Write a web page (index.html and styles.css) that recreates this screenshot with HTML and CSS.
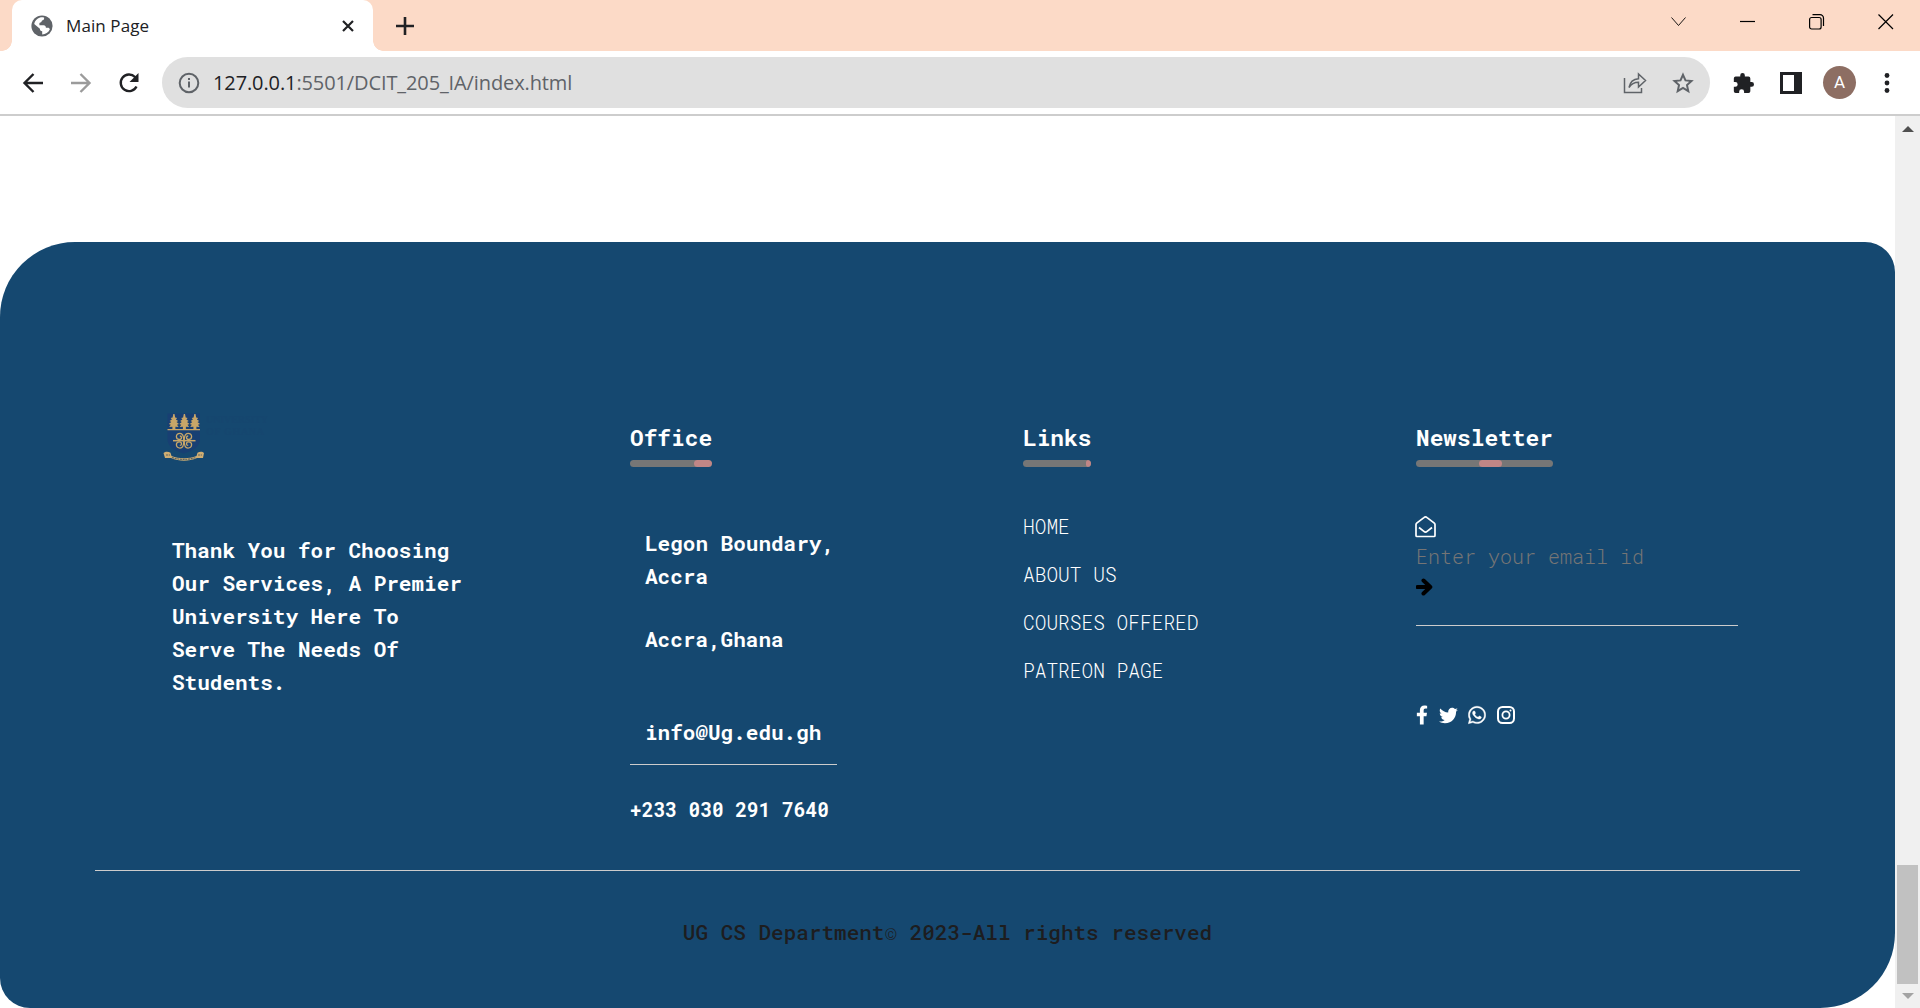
FILE: index.html
```html
<!DOCTYPE html>
<html lang="en">
<head>
<meta charset="utf-8">
<title>Main Page</title>
<link rel="stylesheet" href="styles.css">
</head>
<body>
<header class="tabstrip">
  <div class="tab">
    <svg class="globe" width="22" height="22" viewBox="0 0 22 22"><circle cx="11" cy="11" r="10.6" fill="#5f6368"/><path d="M9 2.6c1.600-.4 3-.3 4.200.1-.1 1.700-.7 2.600-2.200 2.900-.4 1.800-1.300 2-2.600 2.300v2.300h4.200c1.600 0 2.300 1 2.300 2.600h2c1 0 1.700.7 2 1.500-1.400 3.200-4.400 5.100-7.700 5.200v-3.200c-1.700-.1-2.300-.8-2.300-2.500L3.200 9.100C3.700 6 6 3.500 9 2.600z" fill="#fff"/></svg>
    <span class="tab-title">Main Page</span>
    <svg width="14" height="14" viewBox="0 0 14 14"><path d="M2 2l10 10M12 2L2 12" stroke="#202124" stroke-width="2.200"/></svg>
  </div>
  <svg class="new-tab" width="18" height="18" viewBox="0 0 18 18"><path d="M9 0v18M0 9h18" stroke="#202124" stroke-width="2.600"/></svg>
  <div class="window-buttons">
    <svg width="16" height="16" viewBox="0 0 16 16"><path d="M.5 3.500L7.500 11.500 14.500 3.500" stroke-width=".9"/></svg>
    <svg width="16" height="16" viewBox="0 0 16 16"><path d="M0 7.500h15"/></svg>
    <svg width="16" height="16" viewBox="0 0 16 16"><rect x=".6" y="3.500" width="11.500" height="11.500" rx="2"/><path d="M3.500.6H11a3.500 3.500 0 0 1 3.500 3.500v7.900"/></svg>
    <svg width="16" height="16" viewBox="0 0 16 16"><path d="M.5.5l14.500 14.500M15 .5L.5 15"/></svg>
  </div>
</header>
<nav class="toolbar">
  <svg width="22" height="22" viewBox="0 0 22 22" class="dark"><path d="M21 11H3M11.500 2L2.500 11l9 9"/></svg>
  <svg width="22" height="22" viewBox="0 0 22 22" class="dim"><path d="M1 11h18M10.500 2l9 9-9 9"/></svg>
  <svg width="22" height="22" viewBox="0 0 22 22" class="dark"><path d="M18.500 14.500A8.300 8.300 0 1 1 17 5l1.500 2"/><path d="M20.500 1v9h-9z" fill="#202124" stroke="none"/></svg>
  <div class="omnibox">
    <svg width="22" height="22" viewBox="0 0 22 22" class="grey"><circle cx="11" cy="11" r="9.300"/><path d="M11 9.500v6M11 6v2"/></svg>
    <span class="url"><b>127.0.0.1</b>:5501/DCIT_205_IA/index.html</span>
    <svg width="24" height="22" viewBox="0 0 24 22" class="grey thin"><path d="M1.500 6v14.500h17V16M6 15.500C7 10 10 7 15.500 6.700V2l7 6.500-7 6.500v-4.700C11.500 10.300 8.500 11.500 6 15.500z"/></svg>
    <svg width="22" height="22" viewBox="0 0 22 22" class="grey"><path d="M11 2.800l2.500 5.600 6 .6-4.500 4.100 1.300 6L11 15.900l-5.300 3.200 1.300-6L2.500 9l6-.6z"/></svg>
  </div>
  <svg width="22" height="22" viewBox="0 0 24 24"><path fill="#202124" d="M21.500 11H20V7a2 2 0 0 0-2-2h-4V3.500a2.500 2.500 0 0 0-5 0V5H4a2 2 0 0 0-2 2v3.800h1.500a2.700 2.700 0 0 1 0 5.400H2V21a2 2 0 0 0 2 2h3.800v-1.500a2.700 2.700 0 0 1 5.400 0V23H18a2 2 0 0 0 2-2v-5h1.500a2.500 2.500 0 0 0 0-5z"/></svg>
  <svg width="22" height="22" viewBox="0 0 22 22"><path fill="#202124" fill-rule="evenodd" d="M0 0h22v22H0zM3 3v16h11V3z"/></svg>
  <span class="avatar">A</span>
  <svg width="6" height="22" viewBox="0 0 6 22"><g fill="#202124"><circle cx="3" cy="3.500" r="2.400"/><circle cx="3" cy="11" r="2.400"/><circle cx="3" cy="18.500" r="2.400"/></g></svg>
</nav>
<div class="viewport">
  <main class="page">
    <footer class="site-footer">
      <div class="columns">
        <section class="about">
          <svg class="crest" width="112" height="50" viewBox="0 -1.500 112 50">
            <path d="M4.500 0H37v25c0 8-6 12-16.200 15C10.500 37 4.500 33 4.500 25z" fill="#183f73"/>
            <g fill="#c8a668"><path id="tree" d="M10.300.5h1.200l.7 3.500 1.900.4-1.200 1.700 2.300 1.400-1.700 1 2.500 2-2 .7 1.600 2.400-3.200-.3v2.700H9.400v-2.700l-3.200.3 1.600-2.400-2-.7 2.500-2-1.700-1 2.300-1.400-1.200-1.700 1.900-.4z"/><use href="#tree" x="10.500"/><use href="#tree" x="21"/><path d="M4.500 15.400H37v1.300H4.500z"/></g>
            <g fill="none" stroke="#c8a668" stroke-width="1.300"><path d="M10 27.200h22.500" stroke-width="1.500"/><path id="curl" d="M20.800 27.200c0-3.200-.2-7.400-3.800-7.400-2.200 0-3.600 1.500-3.600 3.300s1.400 2.900 2.900 2.900 2.200-1 2.200-2-.8-1.500-1.700-1.500"/><use href="#curl" transform="matrix(-1 0 0 1 42 0)"/><use href="#curl" transform="matrix(1 0 0 -1 0 54.400)"/><use href="#curl" transform="matrix(-1 0 0 -1 42 54.400)"/></g>
            <path d="M.5 39.500c2-1.800 5-1.500 7-.2l1 3.200c8 3 17 3 25 0l1-3.200c2-1.300 5-1.600 6.500.2l-1 5h-6c-8 3.500-18 3.500-26 0H2z" fill="#cfae72"/>
            <path d="M9 44c8 2.500 16 2.500 24 0M3 41.500h4M35 41.500h4" fill="none" stroke="#5c6464" stroke-width="1.200" stroke-dasharray="2 .7"/>
            <g class="wordmark"><text x="43" y="9.500" textLength="62">UNIVERSITY</text><text x="43" y="21.500" textLength="58">OF GHANA</text></g>
          </svg>
          <p>Thank You for Choosing Our Services, A Premier University Here To Serve The Needs Of Students.</p>
        </section>
        <section class="office">
          <h3>Office<span class="bar"><i></i></span></h3>
          <p>Legon Boundary, Accra</p>
          <p class="city">Accra,Ghana</p>
          <p class="email">info@Ug.edu.gh</p>
          <h4>+233 030 291 7640</h4>
        </section>
        <section class="links">
          <h3>Links<span class="bar"><i></i></span></h3>
          <ul><li>HOME</li><li>ABOUT US</li><li>COURSES OFFERED</li><li>PATREON PAGE</li></ul>
        </section>
        <section class="newsletter">
          <h3>Newsletter<span class="bar"><i></i></span></h3>
          <div class="form">
            <svg width="21" height="22" viewBox="0 0 21 22"><path d="M1 8.500c0-.6.300-1 .7-1.400L8.900 1.600c1-.8 2.200-.8 3.200 0l7.200 5.500c.4.400.7.800.7 1.400v11c0 .6-.4 1-1 1H2c-.6 0-1-.4-1-1zM4 11.500l4.900 3.900c1 .9 2.200.9 3.200 0L17 11.500" fill="none" stroke="#fff" stroke-width="1.700"/></svg>
            <span class="placeholder">Enter your email id</span>
            <svg width="17" height="18" viewBox="0 0 17 18"><path d="M1.500 9h12.500M7.500 2.500l6.800 6.500-6.800 6.500" fill="none" stroke="#000" stroke-width="4" stroke-linecap="round" stroke-linejoin="round"/></svg>
          </div>
          <div class="social">
            <svg width="12" height="20" viewBox="0 0 320 512"><path d="M279 288l14-93h-89v-60c0-25 12-50 52-50h41V7s-37-7-72-7c-73 0-121 44-121 125v70H23v93h81v224h100V288z"/></svg>
            <svg width="19" height="19" viewBox="0 0 512 512"><path d="M459 152c.3 4.500.3 9 .3 14 0 139-106 299-299 299-59 0-115-17-161-47 8 1 16 1.300 25 1.300 49 0 94-17 130-45-46-1-85-31-98-73 7 1 13 2 20 2 9 0 19-1 28-4-48-10-84-52-84-103v-1c14 8 30 13 47 13-28-19-47-51-47-87 0-19 5-37 14-53 52 64 129 105 216 110-2-8-3-16-3-24 0-58 47-105 105-105 30 0 58 13 77 33 24-5 46-13 67-25-8 25-24 45-46 58 21-2 42-8 60-16-14 21-32 39-52 54z"/></svg>
            <svg width="18" height="20" viewBox="0 0 448 512"><path stroke="#fff" stroke-width="10" d="M381 97C339 55 283 32 224 32 102 32 2 131 2 254c0 39 10 77 30 111L0 480l118-31c32 18 69 27 106 27 122 0 224-100 224-222 0-59-25-115-67-157zM224 439c-33 0-66-9-94-26l-7-4-70 18 19-68-4-7c-19-29-29-63-29-98 0-102 83-185 185-185 49 0 96 19 131 54s56 82 56 131c0 102-85 185-187 185zm101-138c-6-3-33-16-38-18s-9-3-13 3-14 18-17 22c-4 4-7 4-12 1-33-16-54-29-76-67-6-10 6-9 16-31 2-4 1-7 0-10s-12-30-17-41c-5-10-9-9-13-9h-11c-4 0-10 1-15 7s-19 19-19 46 20 54 23 57c2 4 39 60 95 84 35 15 49 16 66 14 11-2 33-13 37-26s5-24 3-26c-1-3-5-4-9-6z"/></svg>
            <svg width="18" height="18" viewBox="0 0 18 18" fill="none" stroke="#fff"><rect x="1" y="1" width="16" height="16" rx="4.500" stroke-width="2"/><circle cx="9" cy="9" r="3.600" stroke-width="1.800"/><circle cx="13.500" cy="4.500" r="1" fill="#fff" stroke="none"/></svg>
          </div>
        </section>
      </div>
      <p class="copyright">UG CS Department<span>©</span> 2023-All rights reserved</p>
    </footer>
  </main>
  <aside class="scrollbar">
    <svg width="12" height="6" viewBox="0 0 12 6"><path d="M0 6l6-6 6 6z" fill="#505050"/></svg>
    <div class="thumb"></div>
    <svg width="12" height="6" viewBox="0 0 12 6"><path d="M0 0l6 6 6-6z" fill="#a3a3a3"/></svg>
  </aside>
</div>
</body>
</html>
```
FILE: styles.css
```css
* { box-sizing: border-box; margin: 0; padding: 0; }
body { width: 1920px; height: 1008px; overflow: hidden; display: flex; flex-direction: column; background: #fff; }
svg { display: block; flex: none; }

/* Browser frame */
.tabstrip { height: 51px; background: #fcdac7; display: flex; align-items: flex-start; padding-left: 12px; font-family: "Open Sans", sans-serif; }
.tab { position: relative; width: 361px; height: 51px; flex: none; background: #fff; border-radius: 10px 10px 0 0; display: flex; align-items: center; padding: 0 18px 0 19px; font-size: 17px; letter-spacing: .1px; color: #202124; }
.tab::before, .tab::after { content: ""; position: absolute; bottom: 0; width: 10px; height: 10px; }
.tab::before { right: 100%; background: radial-gradient(circle at 0 0, #fcdac7 9.500px, #fff 10px); }
.tab::after { left: 100%; background: radial-gradient(circle at 100% 0, #fcdac7 9.500px, #fff 10px); }
.globe { margin-right: 13px; }
.tab-title { flex: 1; }
.new-tab { margin: 17px 0 0 23px; }
.window-buttons { margin: 14px 26px 0 auto; display: flex; gap: 53px; fill: none; stroke: #000; stroke-width: 1.200; }
.toolbar { height: 65px; border-bottom: 2px solid #cdcdcd; display: flex; align-items: center; padding-left: 22px; }
.toolbar > svg { margin-right: 26px; }
.toolbar > svg:nth-of-type(3) { margin-right: 22px; }
.toolbar .dark, .toolbar .dim, .grey { fill: none; stroke: #202124; stroke-width: 2.400; }
.toolbar .dim { stroke: #9b9b9b; }
.toolbar .grey { stroke: #5f6368; stroke-width: 2; }
.toolbar .thin { stroke-width: 1.500; }
.omnibox { width: 1548px; height: 51px; border-radius: 26px; background: #e0e0e0; display: flex; align-items: center; padding: 0 16px; margin-right: 22px; }
.url { flex: 1; margin-left: 13px; font: 20px/28px "Open Sans", sans-serif; letter-spacing: -.11px; color: #5f6368; }
.url b { font-weight: 400; color: #202124; }
.omnibox .thin { margin-right: 25px; }
.avatar { width: 33px; height: 33px; border-radius: 50%; background: #8d6e63; color: #fff; font: 17px/33px Roboto, sans-serif; text-align: center; margin-right: 28px; margin-left: -5px; }

/* Page */
.viewport { height: 892px; display: flex; }
.page { width: 1895px; padding-top: 126px; }
.site-footer { height: 766px; background: #154870; border-radius: 75px 30px 75px 30px; padding: 170px 95px 0; color: #fff; font-family: "Roboto Mono", "Liberation Mono", monospace; }
.columns { height: 459px; display: grid; grid-template-columns: 488px 393px 393px 322px; padding-left: 47px; border-bottom: 1px solid #ccc; }
.about { padding-left: 21px; }
.wordmark { font: 700 10px "Liberation Serif", serif; fill: #16466f; }
.about p { width: 297px; margin: 72px 0 0 9px; font-weight: 700; font-size: 21px; line-height: 33px; }
h3 { display: table; margin-top: 10px; font-size: 22.800px; line-height: 30px; }
.bar { display: block; height: 7px; margin-top: 8px; border-radius: 4px; background: #767676; overflow: hidden; }
.bar i { display: block; height: 7px; width: 18px; margin-left: auto; border-radius: 4px; background: #c08686; }
.links .bar i { width: 5px; }
.newsletter .bar i { width: 23px; margin-right: 51px; }
.office p { width: 207px; padding-left: 15px; font-weight: 700; font-size: 21px; line-height: 33px; margin-top: 60px; }
.office .city { margin-top: 30px; }
.office .email { margin-top: 60px; padding-bottom: 15px; border-bottom: 1px solid #ccc; }
h4 { margin-top: 30px; font-size: 19.500px; line-height: 30px; }
ul { list-style: none; margin-top: 45px; font-size: 19.500px; font-weight: 300; line-height: 30px; }
li + li { margin-top: 18px; }
.form { height: 110px; margin-top: 49px; border-bottom: 1px solid #ccc; display: flex; flex-direction: column; }
.form svg:first-child { margin-left: -1px; }
.placeholder { font-size: 20px; line-height: 30px; font-weight: 300; color: #757575; margin: 3px 0 7px; }
.social { display: flex; align-items: center; margin-top: 79px; fill: #fff; gap: 10.500px; }
.copyright { text-align: center; margin-top: 46px; font-size: 21px; line-height: 30px; font-weight: 500; color: #1d1d1f; }
.copyright span { font-weight: 300; }

.scrollbar { width: 25px; background: #f0f0f0; display: flex; flex-direction: column; align-items: center; padding: 10px 0 9px; }
.thumb { width: 21px; height: 119px; margin: auto 0 9px; background: #c1c1c1; }
```
